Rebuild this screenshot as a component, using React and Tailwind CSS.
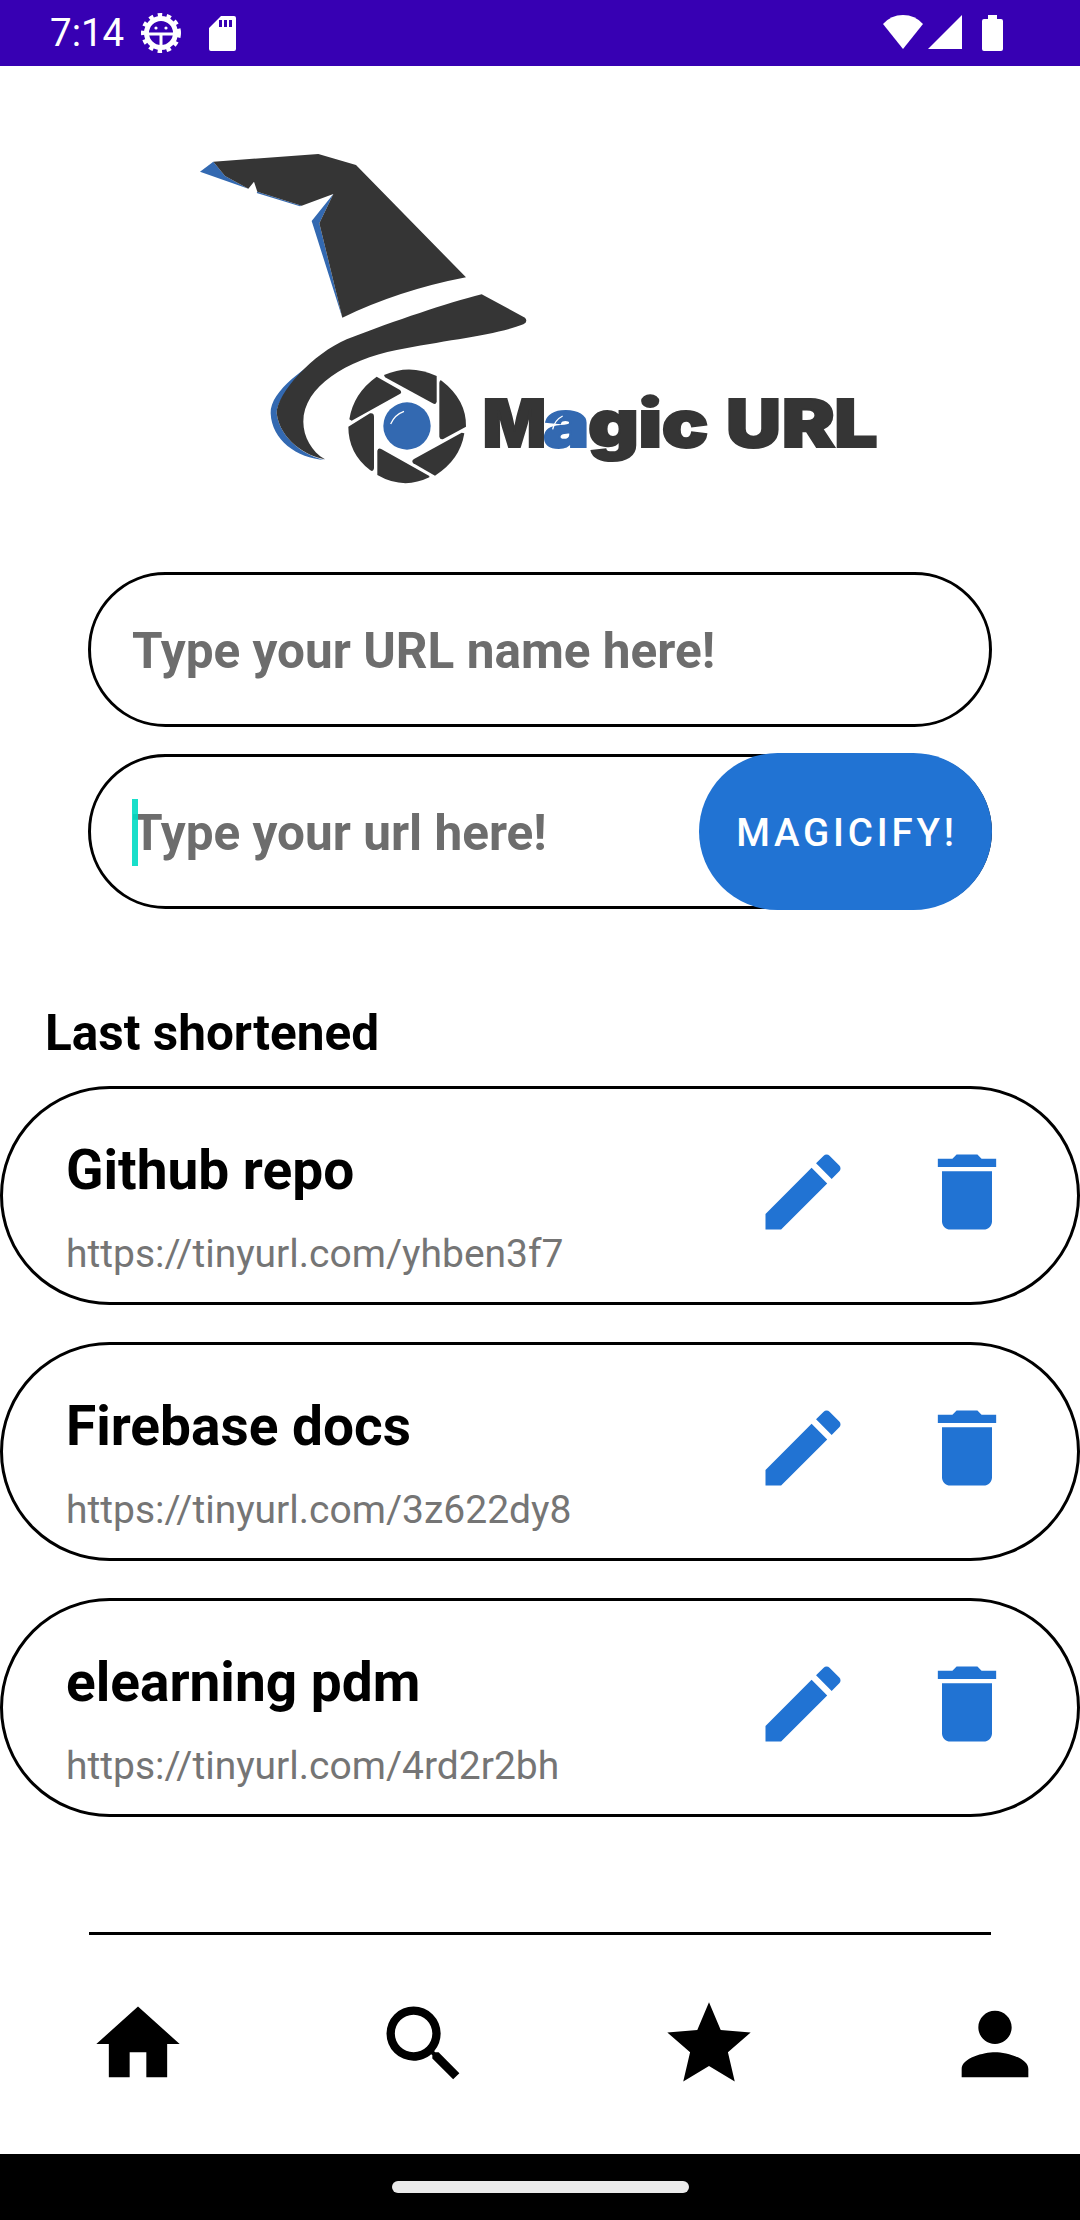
import { MdEdit, MdDelete, MdHome, MdSearch, MdStar, MdPerson } from 'react-icons/md';

const roboto = "font-['Roboto',sans-serif]";

const links = [
    { name: 'Github repo', url: 'https://tinyurl.com/yhben3f7' },
    { name: 'Firebase docs', url: 'https://tinyurl.com/3z622dy8' },
    { name: 'elearning pdm', url: 'https://tinyurl.com/4rd2r2bh' },
];

function StatusBar() {
    return (
        <div className="h-[66px] bg-[#3700b3] flex items-center pl-[50px] pr-[77px] text-white shrink-0">
            <span className="text-[38.5px] leading-none w-[74px]">7:14</span>
            {/* debug gear */}
            <svg className="ml-[17px]" width="40" height="40" viewBox="0 0 40 40" fill="none">
                <circle cx="20" cy="20" r="14.5" stroke="white" strokeWidth="5" />
                <circle cx="20" cy="20" r="18" stroke="white" strokeWidth="4" strokeDasharray="4.5 4.5" />
                <path d="M7 21h26M20 21v13" stroke="white" strokeWidth="3" />
                <circle cx="15" cy="15" r="1.6" fill="white" />
                <circle cx="25" cy="15" r="1.6" fill="white" />
            </svg>
            {/* sd card */}
            <svg className="ml-[28px]" width="27" height="35" viewBox="0 0 27 35">
                <path fillRule="evenodd" fill="white" d="M12 0h13a2 2 0 0 1 2 2v31a2 2 0 0 1-2 2H2a2 2 0 0 1-2-2V12zM10 4v7h3V4zM15 4v7h3V4zM20 4v7h3V4z" />
            </svg>
            <div className="ml-auto flex items-start">
                <svg width="40" height="34" viewBox="0 0 40 34"><path fill="white" d="M20 34 0 9Q8 0 20 0t20 9z" /></svg>
                <svg className="ml-[5px]" width="34" height="34" viewBox="0 0 34 34"><path fill="white" d="M34 0v34H0z" /></svg>
                <svg className="ml-[20px]" width="21" height="36" viewBox="0 0 21 36"><path fill="white" d="M6 0h9v4h4a2 2 0 0 1 2 2v28a2 2 0 0 1-2 2H2a2 2 0 0 1-2-2V6a2 2 0 0 1 2-2h4z" /></svg>
            </div>
        </div>
    );
}

function Logo() {
    const dark = '#353535';
    const blue = '#3369b1';
    return (
        <svg className="block ml-[180px] mt-[74px]" width="720" height="360" viewBox="0 0 2160 1080">
            <path fill={blue} d="M60 95 100 65l35 43 70 38zM232 155l133 42-5 2-130-40zM460 162l-65 81 92 290-69-283z" />
            <path fill={dark} d="M100 65 415 42l113 33 330 337Q660 450 487 533L418 250l42-88-95 35-133-42-10-30-17 21-70-38z" />
            <path fill={blue} d="M470 620C380 680 270 750 272 820c3 80 78 135 163 140-55-10-135-60-145-140 0-60 110-150 180-200z" />
            <path fill={dark} d="M905 463l130 70q10 12-5 20c-80 32-230 47-380 77-150 30-280 110-280 215 0 45 25 90 65 113-55-8-135-58-145-138 0-60 110-180 210-222 150-58 300-108 405-135z" />
            <path fill={dark} d="M612 705Q690 670 770 708v77q-2 10-12 5L615 712z" />
            <path fill={dark} d="M785 722Q860 780 858 860l-68 37q-10 3-12-7V728q2-10 7-6z" />
            <path fill={dark} d="M853 880Q840 960 765 1007l-65-37q-7-7 2-13l143-79z" />
            <path fill={dark} d="M748 1012Q670 1050 592 1005v-73q3-10 13-4l143 80z" />
            <path fill={dark} d="M505 860l65-40q12-2 12 10v155q-2 13-12 5-65-50-65-130z" />
            <path fill={dark} d="M508 838Q520 760 590 710l70 40q8 8-2 13L515 842z" />
            <circle cx="681" cy="858" r="71" fill={blue} />
            <path d="M632 852q12-28 40-38" stroke="white" strokeWidth="4" fill="none" />
            <text y="922" fill={dark} stroke={dark} strokeWidth="6" fontFamily="Inter, sans-serif" fontWeight="900" fontSize="198">
                <tspan x="908" textLength="190" lengthAdjust="spacingAndGlyphs">M</tspan>
                <tspan x="1090" textLength="138" lengthAdjust="spacingAndGlyphs" fill={blue} stroke={blue}>a</tspan>
                <tspan x="1224" textLength="153" lengthAdjust="spacingAndGlyphs">g</tspan>
                <tspan x="1375" textLength="72" lengthAdjust="spacingAndGlyphs">i</tspan>
                <tspan x="1445" textLength="140" lengthAdjust="spacingAndGlyphs">c</tspan>
                <tspan x="1638" textLength="165" lengthAdjust="spacingAndGlyphs">U</tspan>
                <tspan x="1805" textLength="160" lengthAdjust="spacingAndGlyphs">R</tspan>
                <tspan x="1963" textLength="130" lengthAdjust="spacingAndGlyphs">L</tspan>
            </text>
            <path d="M1118 868q6-28 30-40" stroke="white" strokeWidth="4" fill="none" />
        </svg>
    );
}

function UrlInput({ placeholder, focused }) {
    return (
        <div className="mx-[88px] h-[155px] rounded-full border-[3px] border-black flex items-center pl-[41px] relative">
            {focused && <span className="absolute left-[41px] top-[42px] w-[6px] h-[67px] bg-[#00dcc4] opacity-90" />}
            <span className="text-[49.5px] font-bold text-[#6d6d6d] pt-[3px]">{placeholder}</span>
        </div>
    );
}

function LinkCard({ name, url }) {
    return (
        <div className="h-[219px] rounded-full border-[3px] border-black flex items-center pl-[63px]">
            <div className="flex-1 pt-[23px]">
                <div className="text-[55px] font-bold leading-[64px] text-black">{name}</div>
                <div className="mt-[30px] text-[39px] leading-[45px] text-[#757575]">{url}</div>
            </div>
            <div className="flex items-center mr-[60px] mb-[7px]">
                <MdEdit size={100} color="#2173d3" />
                <MdDelete size={100} color="#2173d3" className="ml-[64px]" />
            </div>
        </div>
    );
}

export default function App() {
    return (
        <div className={`${roboto} w-[1080px] h-[2220px] bg-white flex flex-col overflow-hidden`}>
            <StatusBar />
            <Logo />

            <div className="mt-[72px]">
                <UrlInput placeholder="Type your URL name here!" />
                <div className="relative mt-[27px]">
                    <UrlInput placeholder="Type your url here!" focused />
                    <button className="absolute right-[88px] top-[-1px] w-[293px] h-[157px] pt-[3px] pl-[3px] rounded-full bg-[#2173d3] text-white text-[38.5px] font-medium tracking-[3.8px]">
                        MAGICIFY!
                    </button>
                </div>
            </div>

            <h2 className="mt-[97px] ml-[45px] text-[49.5px] leading-[55px] font-bold text-black">Last shortened</h2>

            <div className="mt-[25px] flex flex-col gap-[37px]">
                {links.map((l) => (
                    <LinkCard key={l.url} name={l.name} url={l.url} />
                ))}
            </div>

            <div className="mt-[115px] mx-[89px] h-[3px] bg-black shrink-0" />

            <nav className="mt-[59px] flex justify-between pl-[88px] pr-[35px]">
                <MdHome size={100} />
                <MdSearch size={100} />
                <MdStar size={100} />
                <MdPerson size={100} />
            </nav>

            <div className="mt-auto h-[66px] bg-black flex justify-center items-center shrink-0">
                <div className="w-[297px] h-[12px] rounded-full bg-[#eaeaea]" />
            </div>
        </div>
    );
}
